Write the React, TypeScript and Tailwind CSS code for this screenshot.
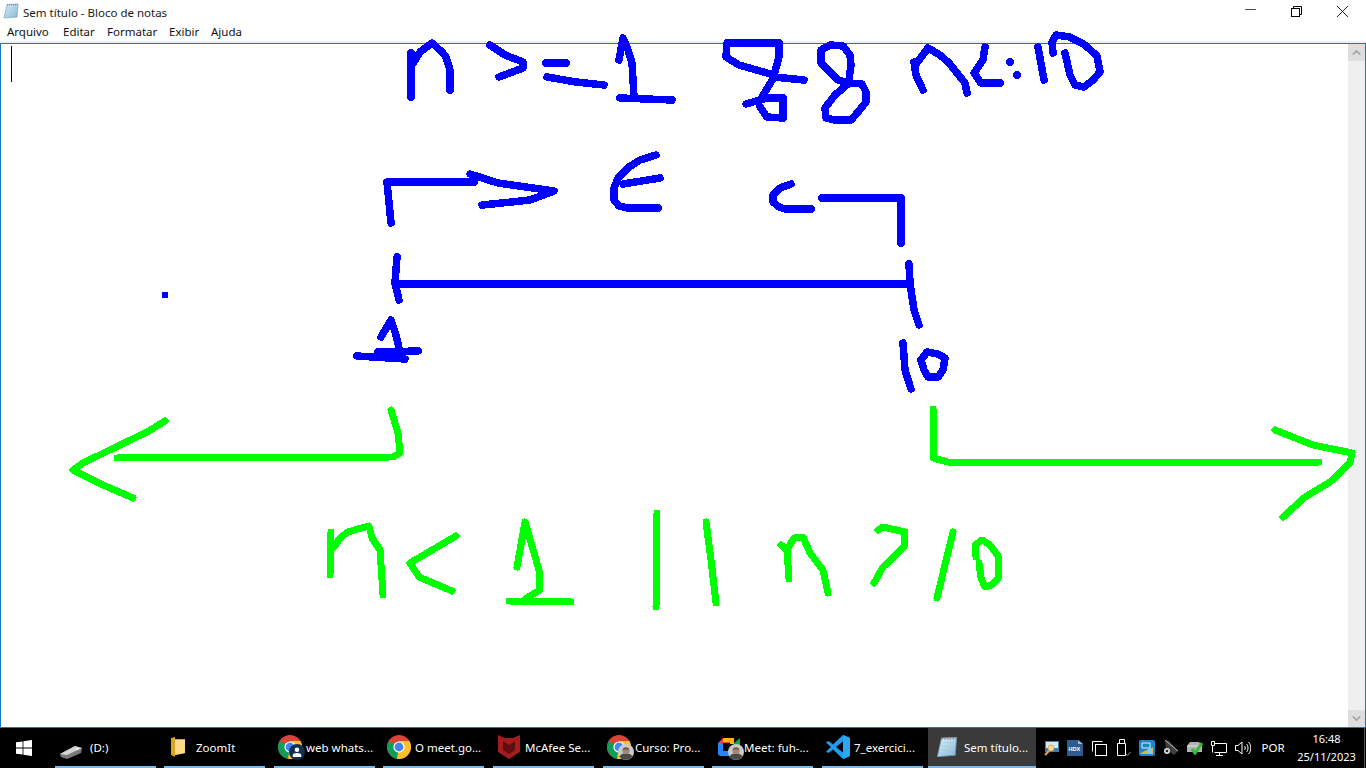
import { Minus, X, ChevronUp, ChevronDown } from "lucide-react";

const blueInk: string[] = [
  // n >= 1
  "411,97 411,53",
  "414,62 420,52 432,43 442,52 446,57 450,70 450,90",
  "490,45 505,55 523,62 523,68 499,77",
  "546,63 566,63",
  "547,77 576,82 604,85",
  "619,60 623,38 628,50 632,63 634,97",
  "620,98 672,100",
  // &&
  "779,43 727,43 726,57 739,65 774,75 779,57 779,43",
  "774,77 804,80",
  "774,77 762,97 767,98 746,104",
  "767,98 783,98 783,118 767,117 760,107",
  "849,80 851,65 850,55 843,46 830,45 821,50 821,63 830,72 838,80 849,83 862,84 866,92 866,102 858,112 851,120 835,120 826,118 825,108 835,95 849,83",
  // n<=10
  "914,62 916,75 923,90",
  "916,64 928,48 940,55 949,63 965,83 967,93",
  "985,47 983,60 974,73 981,83 1000,83",
  "1038,47 1044,80",
  "1053,53 1052,42 1056,35 1070,37 1085,45 1097,56 1100,72 1093,80 1084,87 1075,85 1070,75 1065,53",
  // brackets
  "391,223 387,182 474,182",
  "470,174 498,183 554,191 530,200 502,203 482,205",
  "656,155 640,160 629,167 618,178 614,188 614,200 619,206 628,208 658,208",
  "623,184 660,178",
  "791,184 780,188 773,195 773,202 779,207 785,209 811,209",
  "822,198 901,198 901,243",
  // segment
  "397,257 395,283 399,300",
  "399,284 909,284",
  "909,264 910,283 914,310 919,325",
  // 1
  "381,337 391,320 396,335 399,348",
  "357,356 405,359",
  "378,352 418,351",
  // 10
  "903,343 905,370 911,389",
  "921,360 924,370 928,377 938,377 943,370 945,358 938,354 927,352 921,360",
];

const greenInk: string[] = [
  "391,410 398,433 400,453 393,457 117,458",
  "165,421 147,432 120,445 83,463 73,470 103,485 133,498",
  "933,409 933,458 948,462 1319,462",
  "1275,430 1313,445 1352,453 1350,463 1330,482 1305,497 1283,517",
  "330,575 331,532",
  "334,547 340,538 348,532 358,529 369,526 372,538 380,550 383,595",
  "456,536 410,563 419,577 452,591",
  "517,567 525,522 539,570 540,590 525,599",
  "509,601 571,602",
  "657,513 656,607",
  "706,522 711,560 716,603",
  "789,579 787,550 781,545",
  "787,550 794,538 803,537 810,553 823,570 828,593",
  "878,530 883,527 905,532 904,547 883,567 874,583",
  "953,532 943,573 937,598",
  "976,557 975,545 982,540 990,545 998,556 999,577 992,585 985,587 981,578 979,563",
];

function NotepadIcon({ size = 16 }: { size?: number }) {
  return (
    <svg width={size} height={size} viewBox="0 0 16 16" className="shrink-0">
      <defs>
        <linearGradient id="pad" x1="0" y1="0" x2="1" y2="1">
          <stop offset="0" stopColor="#e8f4fb" />
          <stop offset="1" stopColor="#7fb4d6" />
        </linearGradient>
      </defs>
      <path d="M4 1.500 15 1 14 14 1 15z" fill="url(#pad)" stroke="#6f97ae" strokeWidth="0.6" />
      <path d="M4 2 15 1.500" stroke="#8d8d8d" strokeWidth="1.500" strokeDasharray="1 1" />
      <path d="M4 5h9M3.600 7.500h9M3.200 10h9M2.800 12.500h9" stroke="#a9cde3" strokeWidth="0.7" />
    </svg>
  );
}

function WindowsLogo() {
  return (
    <svg width="16" height="16" viewBox="0 0 16 16" fill="#fff">
      <path d="M0 2.300 6.600 1.400v6.200H0zM7.400 1.300 16 0v7.600H7.400zM0 8.400h6.600v6.200L0 13.700zM7.400 8.400H16V16l-8.600-1.300z" />
    </svg>
  );
}

function DriveIcon() {
  return (
    <svg width="22" height="14" viewBox="0 0 22 14" className="mt-[10px] shrink-0">
      <path d="M0 9 15 1 22 3 21 8 7 14 1 12z" fill="#7a7a7a" />
      <path d="M0 9 15 1 22 3 7 10z" fill="#d4d4d4" />
      <path d="M16 4h3" stroke="#fff" strokeWidth="1" />
    </svg>
  );
}

function FolderIcon() {
  return (
    <svg width="14" height="20" viewBox="0 0 14 20" className="shrink-0">
      <path d="M0 1 4 0v2h10v14L4 18v2L0 18z" fill="#d9a520" />
      <path d="M4 3h10v13L4 18z" fill="#fbdc85" />
    </svg>
  );
}

function ChromeIcon({ badge }: { badge?: "person" | "photo" }) {
  return (
    <div className="relative w-[24px] h-[24px] shrink-0">
      <svg width="24" height="24" viewBox="0 0 24 24">
        <circle cx="12" cy="12" r="12" fill="#db4437" />
        <path d="M12 12 1.600 6 A12 12 0 0 0 10 23.800z" fill="#0f9d58" />
        <path d="M12 12 10 23.800 A12 12 0 0 0 22.400 6 L12 6z" fill="#fbc02d" />
        <circle cx="12" cy="12" r="5.600" fill="#fff" />
        <circle cx="12" cy="12" r="4.400" fill="#4285f4" />
      </svg>
      {badge === "person" && (
        <div className="absolute right-[-3px] bottom-[-1px] w-[16px] h-[16px] rounded-full bg-[#13304f] flex items-center justify-center">
          <svg width="10" height="10" viewBox="0 0 10 10" fill="#fff">
            <circle cx="5" cy="2.800" r="2.300" />
            <path d="M.8 10V8.200C.8 6.800 2.500 6 5 6s4.200.8 4.200 2.200V10z" />
          </svg>
        </div>
      )}
      {badge === "photo" && <PhotoBadge />}
    </div>
  );
}

function PhotoBadge() {
  return (
    <svg width="16" height="16" viewBox="0 0 16 16" className="absolute right-[-3px] bottom-[-1px]">
      <circle cx="8" cy="8" r="8" fill="#c9c9c9" />
      <path d="M1.500 12.500C3 10 5 9.500 8 9.500s5 .5 6.500 3A8 8 0 0 1 1.500 12.500z" fill="#4a4a4a" />
      <circle cx="8" cy="6.500" r="3.600" fill="#a8856e" />
      <path d="M4.600 5.500C5 3 11 3 11.400 5.500z" fill="#5f5a56" />
    </svg>
  );
}

function McAfeeIcon() {
  return (
    <svg width="22" height="24" viewBox="0 0 22 24" className="shrink-0">
      <path d="M0 0 7 3h8l7-3v17l-11 7L0 17z" fill="#a51c1c" />
      <path d="M5 6l6 4 6-4v9l-6 4-6-4z" fill="#5e0e0e" />
    </svg>
  );
}

function MeetIcon() {
  return (
    <div className="relative w-[24px] h-[24px] shrink-0">
      <svg width="24" height="24" viewBox="0 0 24 24">
        <path d="M6 3h11v5H6v8H1V8z" fill="#ea4335" />
        <path d="M1 8h5v8h11v5H4a3 3 0 0 1-3-3z" fill="#2684fc" />
        <path d="M6 3h11v6h-4V7H6z" fill="#ffba00" />
        <path d="M17 8 23 3v14l-6-5z" fill="#00ac47" />
      </svg>
      <PhotoBadge />
    </div>
  );
}

function VSCodeIcon() {
  return (
    <svg width="24" height="24" viewBox="0 0 24 24" className="shrink-0">
      <path d="M17 0 24 3v18l-7 3L7 14.500 2.500 18 0 16.500 5 12 0 7.500 2.500 6 7 9.500z" fill="#1f9cf0" />
      <path d="M17 6.500 10 12l7 5.500z" fill="#000" />
      <path d="M17 0v24l7-3V3z" fill="#27a9f2" />
    </svg>
  );
}

function TrayIcon({ kind }: { kind: string }) {
  if (kind === "search")
    return (
      <svg width="15" height="15" viewBox="0 0 15 15">
        <rect x="1" y="0" width="14" height="11" fill="#3b7ea8" />
        <rect x="2" y="1" width="12" height="6" fill="#d9e6ee" />
        <circle cx="7" cy="7" r="3" fill="#f0d9a8" stroke="#e8a84a" />
        <path d="M5 10 1 14" stroke="#e8a84a" strokeWidth="2" />
      </svg>
    );
  if (kind === "hdx")
    return (
      <svg width="16" height="16" viewBox="0 0 16 16">
        <path d="M0 0h11l5 4v12H0z" fill="#2c5c8f" />
        <path d="M11 0l5 4h-5z" fill="#9bbad6" />
        <text x="1.500" y="11" fontSize="5.500" fontWeight="700" fill="#fff" fontFamily="Liberation Sans, sans-serif">HDX</text>
      </svg>
    );
  if (kind === "copy")
    return (
      <svg width="15" height="15" viewBox="0 0 15 15" fill="none" stroke="#fff" strokeWidth="1">
        <path d="M.5 10.500V.5h10" />
        <rect x="3.500" y="3.500" width="11" height="11" />
      </svg>
    );
  if (kind === "usb")
    return (
      <svg width="15" height="18" viewBox="0 0 15 18" fill="none" stroke="#fff" strokeWidth="1">
        <path d="M3.500.5h5v4h-5zM1.500 4.500h8v12h-8z" />
        <path d="M10 15l1.500 1.500L14.500 13" stroke="#9a9a9a" />
      </svg>
    );
  if (kind === "blue")
    return (
      <svg width="16" height="16" viewBox="0 0 16 16">
        <rect width="16" height="16" rx="2" fill="#1d86c9" />
        <path d="M3 3h8v5H3z" fill="none" stroke="#d9f1ff" />
        <path d="M2 13c4-3 8-3 12-6v7H2z" fill="#e0b341" />
        <circle cx="11" cy="11" r="2.500" fill="#7fd0f0" />
      </svg>
    );
  if (kind === "speaker")
    return (
      <svg width="16" height="16" viewBox="0 0 16 16">
        <path d="M2 0 6 1 15 11 11 15 3 9z" fill="#3f3f3f" />
        <path d="M2 0 15 11" stroke="#b9b9b9" strokeWidth="1" />
        <circle cx="4" cy="11" r="3" fill="#dcdcdc" />
        <circle cx="4" cy="11" r="1.300" fill="#222" />
      </svg>
    );
  if (kind === "check")
    return (
      <svg width="16" height="14" viewBox="0 0 16 14">
        <path d="M0 5 3 1h9l3 4v6H0z" fill="#b2b2b2" />
        <path d="M0 5h15" stroke="#e5e5e5" />
        <path d="M5 8l3 4 7-10" fill="none" stroke="#2fbf3a" strokeWidth="3" />
      </svg>
    );
  if (kind === "network")
    return (
      <svg width="16" height="15" viewBox="0 0 16 15" fill="none" stroke="#fff" strokeWidth="1">
        <path d="M3.500 4.500V.5h-3v4zM3.500 2.500h12v9h-12M8.500 11.500v3M5 14.500h7M1.500 4.500v7" />
      </svg>
    );
  return (
    <svg width="16" height="14" viewBox="0 0 16 14" fill="none" stroke="#fff" strokeWidth="1">
      <path d="M.5 4.500h2.500L7 1v12L3 9.500H.5z" />
      <path d="M9.500 5c1 1 1 3 0 4M11.500 3c2 2 2 6 0 8M13.500 1c3 3 3 9 0 12" />
    </svg>
  );
}

const tasks = [
  { label: "(D:)", icon: <DriveIcon />, slot: "w-[109px]", gap: "gap-[8px] pl-[5px]" },
  { label: "ZoomIt", icon: <FolderIcon />, slot: "w-[110px]", gap: "gap-[11px] pl-[7px]" },
  { label: "web whats...", icon: <ChromeIcon badge="person" />, slot: "w-[109px]", gap: "gap-[4px] pl-[4px]" },
  { label: "O meet.go...", icon: <ChromeIcon />, slot: "w-[110px]", gap: "gap-[4px] pl-[4px]" },
  { label: "McAfee Se...", icon: <McAfeeIcon />, slot: "w-[110px]", gap: "gap-[5px] pl-[5px]" },
  { label: "Curso: Pro...", icon: <ChromeIcon badge="photo" />, slot: "w-[109px]", gap: "gap-[4px] pl-[4px]" },
  { label: "Meet: fuh-...", icon: <MeetIcon />, slot: "w-[110px]", gap: "gap-[3px] pl-[5px]" },
  { label: "7_exercici...", icon: <VSCodeIcon />, slot: "w-[106px]", gap: "gap-[4px] pl-[4px]" },
];

const trayKinds = ["search", "hdx", "copy", "usb", "blue", "speaker", "check", "network", "volume"];

export default function App() {
  return (
    <div className="relative w-[1366px] h-[768px] overflow-hidden bg-white flex flex-col font-['Noto_Sans',sans-serif] text-[11.5px] text-black">
      {/* Title bar */}
      <div className="h-[22px] flex items-center bg-white">
        <div className="pl-[3px] pr-[4px]">
          <NotepadIcon />
        </div>
        <span className="text-[#1a1a1a] mt-[3px]">Sem título - Bloco de notas</span>
        <div className="ml-auto flex mr-px text-black">
          <div className="w-[46px] flex justify-center">
            <Minus size={17} strokeWidth={1} />
          </div>
          <div className="w-[46px] flex justify-center items-center">
            <svg width="11" height="11" viewBox="0 0 11 11" fill="none" stroke="#000">
              <path d="M2.500 2.500V.5h8v8H8.500" />
              <rect x="0.500" y="2.500" width="8" height="8" />
            </svg>
          </div>
          <div className="w-[46px] flex justify-center">
            <X size={21} strokeWidth={1} />
          </div>
        </div>
      </div>

      {/* Menu */}
      <div className="h-[19px] flex items-center bg-white text-[#111]">
        <span className="ml-[7px] w-[56px]">Arquivo</span>
        <span className="w-[44px]">Editar</span>
        <span className="w-[62px]">Formatar</span>
        <span className="w-[42px]">Exibir</span>
        <span>Ajuda</span>
      </div>
      <div className="h-[2px] bg-[#f0f0f0]" />

      {/* Editor */}
      <div className="flex-1 flex border border-[#1a75c4] bg-white min-h-0">
        <div className="flex-1 pl-[10px] pt-[2px]">
          <div className="w-px h-[36px] bg-black" />
        </div>
        <div className="w-[17px] bg-[#efefef] flex flex-col justify-between">
          <div className="h-[17px] bg-[#dedede] flex items-center justify-center text-[#a6a6a6]">
            <ChevronUp size={13} strokeWidth={3} />
          </div>
          <div className="h-[17px] bg-[#dedede] flex items-center justify-center text-[#a6a6a6]">
            <ChevronDown size={13} strokeWidth={3} />
          </div>
        </div>
      </div>

      {/* Taskbar */}
      <div className="h-[40px] bg-black flex text-white text-[11.5px] shrink-0">
        <div className="w-[55px] flex items-center pl-[16px]">
          <WindowsLogo />
        </div>
        {tasks.map((t) => (
          <div key={t.label} className={t.slot}>
            <div className={`w-[101px] h-full border-b-2 border-[#76b9ed] flex items-center ${t.gap}`}>
              {t.icon}
              <span className="whitespace-nowrap mt-[2px]">{t.label}</span>
            </div>
          </div>
        ))}
        <div className="w-[108px] h-full bg-[#3a3a3a] border-b-2 border-[#76b9ed] flex items-center gap-[6px] pl-[8px]">
          <NotepadIcon size={22} />
          <span className="whitespace-nowrap mt-[2px]">Sem título...</span>
        </div>

        {/* Tray */}
        <div className="ml-[3px] flex items-center">
          {trayKinds.map((k) => (
            <div key={k} className="w-[24px] flex justify-center">
              <TrayIcon kind={k} />
            </div>
          ))}
        </div>
        <div className="w-[36px] flex items-center justify-center">POR</div>
        <div className="w-[71px] flex flex-col items-center justify-center text-[11px] leading-[18px]">
          <span>16:48</span>
          <span>25/11/2023</span>
        </div>
        <div className="ml-[2px] w-px bg-[#555]" />
      </div>

      {/* Screen annotation on top of the window */}
      <svg
        width="1366"
        height="768"
        viewBox="0 0 1366 768"
        fill="none"
        strokeLinecap="round"
        strokeLinejoin="round"
        shapeRendering="crispEdges"
        className="absolute inset-0 pointer-events-none"
      >
        <g stroke="#0000ff" strokeWidth="7.500">
          {blueInk.map((p) => (
            <polyline key={p} points={p} />
          ))}
        </g>
        <circle cx="165" cy="295" r="3.500" fill="#0000ff" />
        <circle cx="1010" cy="62" r="4" fill="#0000ff" />
        <circle cx="1017" cy="75" r="4" fill="#0000ff" />
        <g stroke="#00ff00" strokeWidth="7">
          {greenInk.map((p) => (
            <polyline key={p} points={p} />
          ))}
        </g>
      </svg>
    </div>
  );
}
